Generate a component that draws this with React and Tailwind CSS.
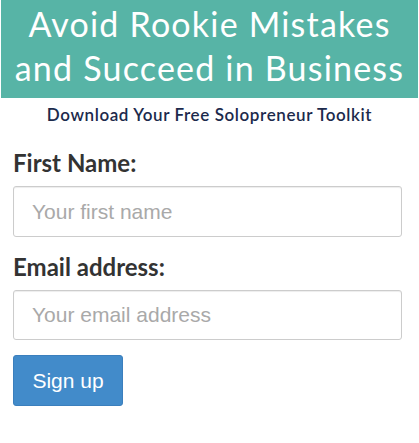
export default function App() {
  return (
    <div className="w-[419px] h-[443px] bg-white font-['Lato','Noto_Sans',sans-serif]">
      <div className="mx-[1px] h-[98px] bg-[#57b4a6] pt-[2px] text-center text-white text-[34px] leading-[44px] tracking-[1.2px]">
        <div>Avoid Rookie Mistakes</div>
        <div>and Succeed in Business</div>
      </div>
      <div className="mt-[5px] text-center text-[17px] leading-[24px] font-semibold tracking-[0.6px] text-[#1c2a4c]">
        Download Your Free Solopreneur Toolkit
      </div>
      <form className="px-[13px] pr-[17px]" onSubmit={(e) => e.preventDefault()}>
        <label className="block mt-[21px] text-[24px] leading-[30px] font-bold text-[#333333]">
          First Name:
        </label>
        <input
          type="text"
          placeholder="Your first name"
          className="mt-[8px] block w-full h-[51px] rounded-[3px] border border-[#cccccc] px-[18px] text-[21px] font-['Liberation_Sans',Arial,sans-serif] text-[#555] placeholder:text-[#a9a9a9] shadow-[inset_0_1px_1px_rgba(0,0,0,0.075)] outline-none"
        />
        <label className="block mt-[15px] text-[24px] leading-[30px] font-bold text-[#333333]">
          Email address:
        </label>
        <input
          type="email"
          placeholder="Your email address"
          className="mt-[8px] block w-full h-[50px] rounded-[3px] border border-[#cccccc] px-[18px] text-[21px] font-['Liberation_Sans',Arial,sans-serif] text-[#555] placeholder:text-[#a9a9a9] shadow-[inset_0_1px_1px_rgba(0,0,0,0.075)] outline-none"
        />
        <button
          type="submit"
          className="mt-[15px] block w-[110px] h-[51px] rounded-[3px] bg-[#428bca] border border-[#3b7fbd] text-white text-[21px] font-['Liberation_Sans',Arial,sans-serif]"
        >
          Sign up
        </button>
      </form>
    </div>
  );
}
